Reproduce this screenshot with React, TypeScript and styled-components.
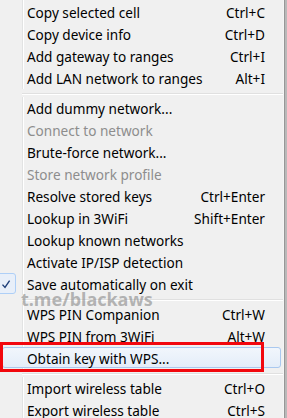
import React from 'react';
import styled, { createGlobalStyle } from 'styled-components';

// **** Style Section **** //

const GlobalStyle = createGlobalStyle`
  html, body {
    margin: 0;
    padding: 0;
    background: #b9b9b9;
  }
`;

const Menu = styled.div`
  position: relative;
  display: flex;
  flex-direction: column;
  width: 285px;
  height: 418px;
  overflow: hidden;
  padding-top: 1px;
  box-sizing: border-box;
  border-right: 1px solid #979797;
  background: linear-gradient(
    90deg,
    #f0f0f0 0,
    #f0f0f0 22px,
    #e2e3e3 22px,
    #e2e3e3 23px,
    #ffffff 23px,
    #ffffff 24px,
    #f0f0f0 24px
  );
  box-shadow: inset -1px 0 0 #f5f5f5;
  font-family: 'Noto Sans', 'Open Sans', sans-serif;
  font-size: 13.6px;
  color: #000;
`;

type RowProps = { disabled?: boolean };
const Row = styled.div<RowProps>`
  position: relative;
  display: flex;
  flex: none;
  align-items: center;
  justify-content: space-between;
  height: 22px;
  padding: 0 19px 0 27px;
  color: ${p => (p.disabled ? '#8d8d8d' : '#000')};
  white-space: nowrap;
`;

const Label = styled.span`
  position: relative;
`;

const Shortcut = styled.span`
  position: relative;
`;

const HoverBox = styled.div`
  position: absolute;
  left: 2px;
  right: 3px;
  top: 0;
  bottom: 1px;
  border: 1px solid #a9c8ef;
  border-radius: 3px;
  background: linear-gradient(#f1f6fc, #e4edf9);
`;

const Marker = styled.div`
  position: absolute;
  left: 0;
  top: -5px;
  width: 264px;
  height: 30px;
  box-sizing: border-box;
  border: 3px solid #f2070d;
`;

const CheckBox = styled.div`
  position: absolute;
  left: -4px;
  top: 0;
  width: 20px;
  height: 21px;
  box-sizing: border-box;
  border: 1px solid #aecff7;
  border-radius: 3px;
  background: #e8eff9;
  display: flex;
  align-items: center;
  justify-content: center;
`;

const Separator = styled.div`
  flex: none;
  height: 8px;
  margin-left: 22px;
  margin-right: 1px;
  background: linear-gradient(
    #f0f0f0 0,
    #f0f0f0 4px,
    #e0e0e0 4px,
    #e0e0e0 5px,
    #ffffff 5px,
    #ffffff 6px,
    #f0f0f0 6px
  );
`;

const Watermark = styled.div`
  position: absolute;
  left: 21px;
  top: 291px;
  font-family: 'Noto Sans', sans-serif;
  font-weight: 700;
  font-size: 18px;
  line-height: 17px;
  color: rgba(125, 125, 125, 0.55);
  pointer-events: none;
`;

// **** Data **** //

type Item =
  | { kind: 'sep' }
  | {
      kind: 'item';
      label: string;
      shortcut?: string;
      disabled?: boolean;
      checked?: boolean;
      hover?: boolean;
    };

const items: Item[] = [
  { kind: 'item', label: 'Copy selected cell', shortcut: 'Ctrl+C' },
  { kind: 'item', label: 'Copy device info', shortcut: 'Ctrl+D' },
  { kind: 'item', label: 'Add gateway to ranges', shortcut: 'Ctrl+I' },
  { kind: 'item', label: 'Add LAN network to ranges', shortcut: 'Alt+I' },
  { kind: 'sep' },
  { kind: 'item', label: 'Add dummy network...' },
  { kind: 'item', label: 'Connect to network', disabled: true },
  { kind: 'item', label: 'Brute-force network...' },
  { kind: 'item', label: 'Store network profile', disabled: true },
  { kind: 'item', label: 'Resolve stored keys', shortcut: 'Ctrl+Enter' },
  { kind: 'item', label: 'Lookup in 3WiFi', shortcut: 'Shift+Enter' },
  { kind: 'item', label: 'Lookup known networks' },
  { kind: 'item', label: 'Activate IP/ISP detection' },
  { kind: 'item', label: 'Save automatically on exit', checked: true },
  { kind: 'sep' },
  { kind: 'item', label: 'WPS PIN Companion', shortcut: 'Ctrl+W' },
  { kind: 'item', label: 'WPS PIN from 3WiFi', shortcut: 'Alt+W' },
  { kind: 'item', label: 'Obtain key with WPS...', hover: true },
  { kind: 'sep' },
  { kind: 'item', label: 'Import wireless table', shortcut: 'Ctrl+O' },
  { kind: 'item', label: 'Export wireless table', shortcut: 'Ctrl+S' }
];

const CheckIcon = () => (
  <svg width="10" height="10" viewBox="0 0 10 10">
    <path
      d="M1.5 5.6 L4 8.4 L8.6 1.6"
      fill="none"
      stroke="#1f3f78"
      strokeWidth="1.4"
    />
  </svg>
);

// **** Component Function **** //

const App = () => (
  <>
    <GlobalStyle />
    <Menu>
      {items.map((item, i) => {
        if (item.kind === 'sep') return <Separator key={i} />;
        return (
          <Row key={i} disabled={item.disabled}>
            {item.hover && <HoverBox />}
            {item.checked && (
              <CheckBox>
                <CheckIcon />
              </CheckBox>
            )}
            <Label>{item.label}</Label>
            {item.shortcut && <Shortcut>{item.shortcut}</Shortcut>}
            {item.hover && <Marker />}
          </Row>
        );
      })}
      <Watermark>t.me/blackaws</Watermark>
    </Menu>
  </>
);

export default App;
